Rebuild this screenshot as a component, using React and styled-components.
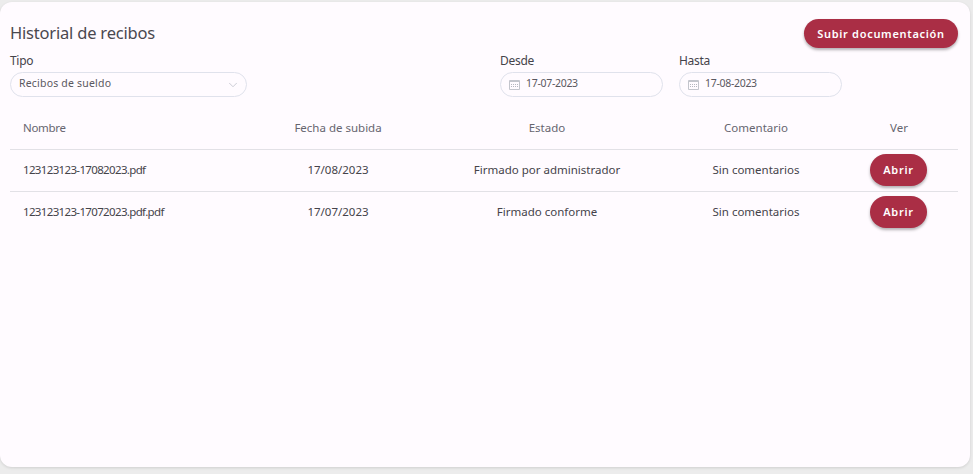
import React from "react";
import styled, { createGlobalStyle } from "styled-components";
import { ChevronDown } from "lucide-react";

const Global = createGlobalStyle`
  html, body { margin: 0; padding: 0; background: #ececec; }
  body { font-family: "Noto Sans", "Liberation Sans", sans-serif; }
  * { box-sizing: border-box; }
`;

const Page = styled.div`
  width: 973px;
  height: 474px;
  padding: 2px 3px 7px 0;
  overflow: hidden;
`;
const Card = styled.main`
  height: 465px;
  background: #fffbff;
  border-radius: 12px;
  padding: 17px 12px 0 10px;
  box-shadow: 0 1px 3px rgba(0, 0, 0, 0.12);
`;
const Header = styled.header`
  display: flex;
  justify-content: space-between;
  align-items: center;
  height: 29px;
`;
const Title = styled.h1`
  margin: 0 0 3px;
  font-size: 16.5px;
  font-weight: 400;
  letter-spacing: -0.2px;
  color: #4a484f;
`;
const Pill = styled.button`
  border: 0;
  height: ${(p) => p.$h}px;
  width: ${(p) => p.$w}px;
  padding: 0;
  border-radius: 999px;
  background: #aa2e45;
  color: #fff;
  font: 600 11px "Noto Sans", sans-serif;
  letter-spacing: 0.7px;
  box-shadow: 0 2px 3px rgba(0, 0, 0, 0.3);
`;
const Filters = styled.section`
  display: flex;
  margin-top: 3px;
`;
const Field = styled.div`
  width: ${(p) => p.$w}px;
  margin-right: ${(p) => p.$gap || 0}px;
`;
const Label = styled.div`
  height: 21px;
  padding-top: 2px;
  font-size: 12px;
  line-height: 16px;
  letter-spacing: -0.3px;
  color: #45434a;
`;
const Input = styled.div`
  height: 25px;
  border: 1px solid #e0e2ec;
  border-radius: 13px;
  display: flex;
  align-items: center;
  gap: 6px;
  padding: 0 6px 3px 8px;
  font-size: 10.5px;
  letter-spacing: ${(p) => (p.$date ? "-0.3px" : "0.2px")};
  color: #5a5860;
`;
const Grow = styled.span`
  flex: 1;
`;
const Chevron = styled(ChevronDown)`
  width: 14px;
  height: 14px;
  color: #b9bcc6;
  stroke-width: 1.25;
  margin-top: 3px;
`;
const Table = styled.section`
  margin-top: 11px;
`;
const Row = styled.div`
  display: grid;
  grid-template-columns: 244px 168px 250px 168px 118px;
  align-items: center;
  height: 42px;
  padding-bottom: 2px;
  border-bottom: 1px solid ${(p) => (p.$last ? "transparent" : "#e2e1e6")};
  font-size: 11.5px;
  color: ${(p) => (p.$head ? "#66656f" : "#45434a")};
`;
const Cell = styled.div`
  display: flex;
  justify-content: center;
`;
const ActionCell = styled(Cell)`
  padding-right: 1px;
`;
const NameCell = styled.div`
  padding-left: 13px;
  letter-spacing: ${(p) => (p.$file ? "-0.65px" : "-0.3px")};
`;

const CalendarIcon = () => (
  <svg width="11" height="11" viewBox="0 0 11 11" style={{ marginTop: 3, flex: "none" }}>
    <path d="M.5 1.5h10v9H.5z" fill="none" stroke="#c3c5cc" />
    <path d="M1 1h9v2H1z" fill="#c3c5cc" />
    <path d="M2 5h1v1H2zM4 5h1v1H4zM6 5h1v1H6zM8 5h1v1H8zM2 7h1v1H2zM4 7h1v1H4zM6 7h1v1H6zM8 7h1v1H8z" fill="#b5b7bf" />
  </svg>
);

const rows = [
  ["123123123-17082023.pdf", "17/08/2023", "Firmado por administrador", "Sin comentarios"],
  ["123123123-17072023.pdf.pdf", "17/07/2023", "Firmado conforme", "Sin comentarios"],
];

export default function App() {
  return (
    <Page>
      <Global />
      <Card>
        <Header>
          <Title>Historial de recibos</Title>
          <Pill $w={154} $h={29}>Subir documentación</Pill>
        </Header>
        <Filters>
          <Field $w={237} $gap={253}>
            <Label>Tipo</Label>
            <Input>
              <Grow>Recibos de sueldo</Grow>
              <Chevron />
            </Input>
          </Field>
          <Field $w={163} $gap={16}>
            <Label>Desde</Label>
            <Input $date><CalendarIcon />17-07-2023</Input>
          </Field>
          <Field $w={163}>
            <Label>Hasta</Label>
            <Input $date><CalendarIcon />17-08-2023</Input>
          </Field>
        </Filters>
        <Table>
          <Row $head>
            <NameCell>Nombre</NameCell>
            <Cell>Fecha de subida</Cell>
            <Cell>Estado</Cell>
            <Cell>Comentario</Cell>
            <Cell>Ver</Cell>
          </Row>
          {rows.map((r, i) => (
            <Row key={r[0]} $last={i === rows.length - 1}>
              <NameCell $file>{r[0]}</NameCell>
              <Cell>{r[1]}</Cell>
              <Cell>{r[2]}</Cell>
              <Cell>{r[3]}</Cell>
              <ActionCell><Pill $w={57} $h={32}>Abrir</Pill></ActionCell>
            </Row>
          ))}
        </Table>
      </Card>
    </Page>
  );
}
